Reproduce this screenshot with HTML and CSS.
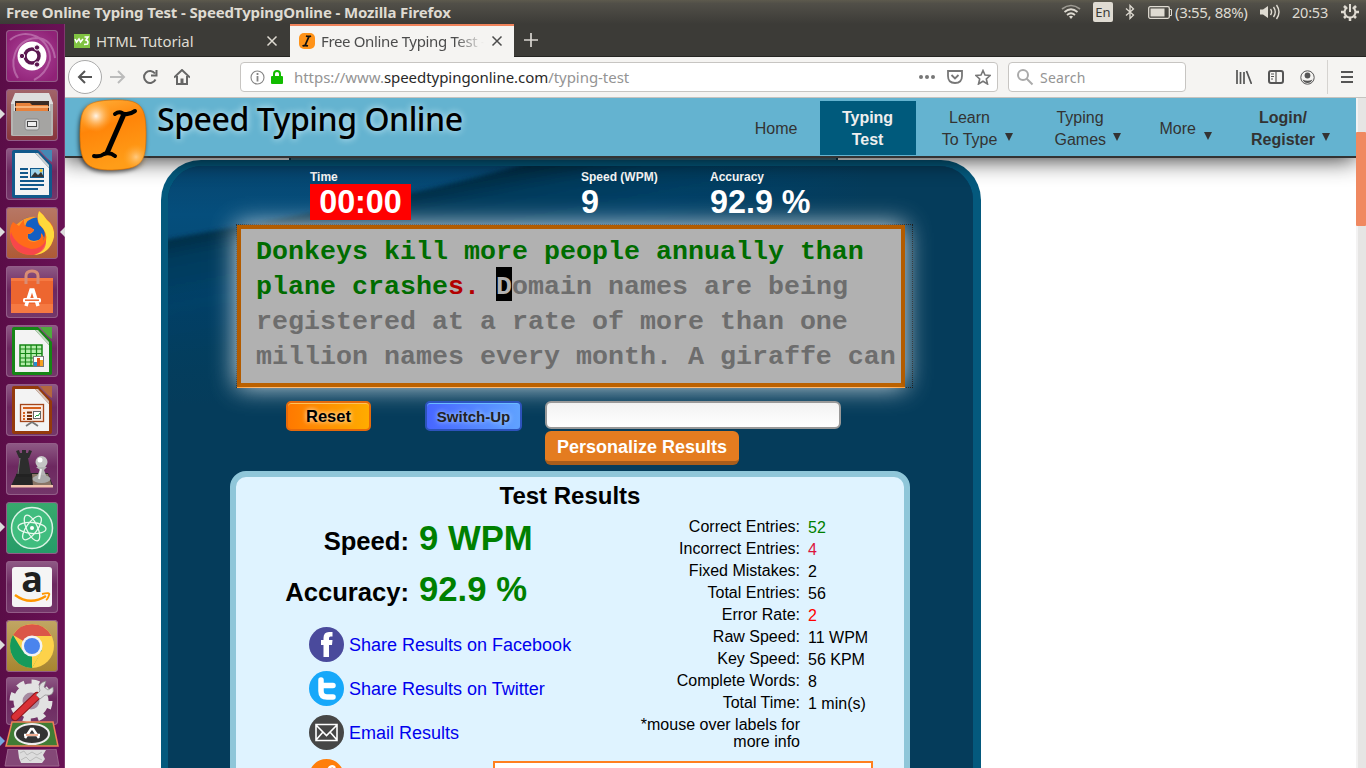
FILE: index.html
```html
<!DOCTYPE html>
<html lang="en">
<head>
<meta charset="utf-8">
<title>Free Online Typing Test - SpeedTypingOnline</title>
<link rel="stylesheet" href="styles.css">
</head>
<body>
<header class="panel">
  <span class="window-title">Free Online Typing Test - SpeedTypingOnline - Mozilla Firefox</span>
  <div class="indicators">
    <svg class="ind-wifi" width="20" height="16" viewBox="0 0 20 16" fill="none" stroke="#dfdbd2" stroke-width="1.7"><path d="M1 5Q10-2 19 5" opacity=".55"/><path d="M3.500 8Q10 2.500 16.500 8M6 11Q10 7.500 14 11"/><path d="M8 12.500L10 15L12 12.500Q10 11 8 12.500Z" fill="#dfdbd2" stroke="none"/></svg>
    <span class="lang">En</span>
    <svg class="ind-bt" width="10" height="16" viewBox="0 0 10 16" fill="none" stroke="#dfdbd2" stroke-width="1.3"><path d="M1 4.500L8.500 11L5 14.500V1.500L8.500 5L1 11.500"/></svg>
    <svg class="ind-bat" width="25" height="13" viewBox="0 0 25 13"><rect x=".7" y=".7" width="20.600" height="11.600" rx="1.500" fill="none" stroke="#dfdbd2" stroke-width="1.300"/><rect x="2.500" y="2.500" width="14" height="8" fill="#dfdbd2"/><path d="M21 3.500h2.500v6H21" fill="none" stroke="#dfdbd2"/></svg>
    <span class="battery">(3:55, 88%)</span>
    <svg class="ind-vol" width="21" height="16" viewBox="0 0 21 16" fill="none" stroke="#dfdbd2" stroke-width="1.400"><path d="M0 5.500h3L8 2v12L3 10.500H0Z" fill="#dfdbd2" stroke="none"/><path d="M10.500 5q2.200 3 0 6M13.500 3q3.500 5 0 10M16.500 1q5 7 0 14"/></svg>
    <span class="clock">20:53</span>
    <svg width="18" height="18" viewBox="0 0 18 18" fill="none" stroke="#dfdbd2"><path d="M6.300 4.400a5.400 5.400 0 1 0 5.400 0" stroke-width="2"/><path d="M9 1v8" stroke-width="2"/><path d="M9 15v3M0 9h3M15 9h3M3 3l2 2M15 3l-2 2M3 15l2-2M15 15l-2-2" stroke-width="2.500"/></svg>
  </div>
</header>
<div class="desktop">
  <nav class="launcher">
    <div class="tile dash"><svg viewBox="0 0 52 52"><path d="M12 48C2 34 8 10 30 8Q46 8 49 28M4 10C20-4 45 8 44 30Q40 44 28 50" fill="none" stroke="#d49bc9" stroke-width="2" opacity=".5"/><circle cx="26" cy="26" r="14.500" fill="#fff"/><circle cx="26" cy="26" r="7" fill="none" stroke="#5b1750" stroke-width="3.500"/><g fill="#5b1750" stroke="#fff" stroke-width="1"><circle cx="16" cy="26" r="2.700"/><circle cx="31" cy="17.500" r="2.700"/><circle cx="31" cy="34.500" r="2.700"/></g></svg></div>
    <div class="tile files run"><svg viewBox="0 0 52 52"><path d="M9 4H43L47 14V22H5V14Z" fill="#ddd"/><path d="M9 12H43V24H9Z" fill="#3b2b25"/><path d="M10 14H24L26 16H42V25H10Z" fill="#e8813a"/><path d="M9 18H43" stroke="#ffc48f" stroke-width="1.500"/><path d="M5 15H8V22H44V15H47V46Q47 47 45 47H7Q5 47 5 46Z" fill="#b6b5b3"/><path d="M7 22H45V46H7Z" fill="#a5a4a2"/><rect x="19" y="30" width="14" height="11" rx="2" fill="#d7d7d7" stroke="#888"/><rect x="21.500" y="32.500" width="9" height="5" fill="#eee" stroke="#444"/></svg></div>
    <div class="tile"><svg viewBox="0 0 52 52"><path d="M8 2H32L46 17V48Q46 50 44 50H8Q6 50 6 48V4Q6 2 8 2Z" fill="#12598b"/><path d="M9 5H29L43 20V47H9Z" fill="#f3f3f3"/><path d="M29 5L43 20V17L32 5Z" fill="#d0d0d0"/><path d="M34 2H46V14Q41 11 34 2Z" fill="#4488b4"/><path d="M14 21h8M14 25h8M14 29h8M14 33h24M14 37h24M14 41h18" stroke="#12598b" stroke-width="1.800"/><rect x="24.500" y="20.500" width="13" height="9" fill="#9cd1e8" stroke="#12598b"/><path d="M25 29l4-5 3 3 3-3 3 5Z" fill="#333"/><circle cx="35" cy="22.500" r="1.500" fill="#f2c32a"/></svg></div>
    <div class="tile fx run active"><svg viewBox="0 0 52 52"><circle cx="26" cy="27" r="17" fill="#145fc2"/><path d="M10 18Q20 8 31 10Q20 12 19 20L22 22H28Q27 27 22 27Q20 33 28 34Q34 33 38 30Q35 38 27 37Q16 34 17 24L12 23Z" fill="#ff9a28"/><path d="M7 15L13 19L18 12Q17 19 22 20Q27 20 28 24Q25 26 22 27Q19 34 28 35Q36 34 35 26Q39 29 37 34Q42 24 33 18Q30 12 33 4Q38 8 40 12Q49 17 48 29Q45 47 26 48Q7 48 4 30Q3 20 7 15Z" fill="#ff6b1a"/><path d="M33 4Q38 8 41 13Q49 19 48 30Q44 47 28 48Q38 44 40 34Q42 26 34 18Q30 12 33 4Z" fill="#ffd83b"/><path d="M5 25Q9 38 25 42Q36 42 40 33Q41 45 27 48Q7 48 4 30Z" fill="#f33760" opacity=".7"/></svg></div>
    <div class="tile"><svg viewBox="0 0 52 52"><path d="M5 12H47V47H5Z" fill="#ed6630"/><path d="M5 12H47V15H5ZM5 38H47V47H5Z" fill="#f57942"/><path d="M20 18V10Q20 5 26 5T32 10V18" fill="none" stroke="#d98d74" stroke-width="3"/><path d="M20 40L25 24H27L32 40" fill="none" stroke="#fff" stroke-width="3.500"/><rect x="17" y="32" width="18" height="4.500" rx="1.500" fill="#fff"/><path d="M19 34.200H33" stroke="#ed6630" stroke-width="1.500"/></svg></div>
    <div class="tile"><svg viewBox="0 0 52 52"><path d="M8 2H32L46 17V48Q46 50 44 50H8Q6 50 6 48V4Q6 2 8 2Z" fill="#168516"/><path d="M9 5H29L43 20V47H9Z" fill="#f3f3f3"/><path d="M29 5L43 20V17L32 5Z" fill="#c6d6c4"/><path d="M34 2H46V14Q41 11 34 2Z" fill="#4eaa3e"/><path d="M14 20h22v21H14Z" fill="#b4edab" stroke="#168516" stroke-width="1.500"/><path d="M19.500 20v21M25 20v21M30.500 20v21M14 24h22M14 28.500h22M14 33h22M14 37h22" stroke="#168516" stroke-width="1.200"/><rect x="27.500" y="31.500" width="10" height="10" fill="#fff" stroke="#777"/><path d="M28 37h3v4h-3Z" fill="#258ed0"/><path d="M31 33h3v8h-3Z" fill="#d9531e"/><path d="M34 35h3v6h-3Z" fill="#f4a020"/></svg></div>
    <div class="tile"><svg viewBox="0 0 52 52"><path d="M8 2H32L46 17V48Q46 50 44 50H8Q6 50 6 48V4Q6 2 8 2Z" fill="#943a0c"/><path d="M9 5H29L43 20V47H9Z" fill="#f3f3f3"/><path d="M29 5L43 20V17L32 5Z" fill="#d5c6be"/><path d="M34 2H46V14Q41 11 34 2Z" fill="#b3673f"/><rect x="14.500" y="20.500" width="23" height="17" fill="#fae8df" stroke="#a44519" stroke-width="1.300"/><path d="M17 24h18" stroke="#d45f1c" stroke-width="2"/><path d="M17 29h2M17 32h2M17 35h2" stroke="#d45f1c" stroke-width="2"/><path d="M21 28.500h5M21 32h5M21 35h5" stroke="#762d07" stroke-width="2"/><rect x="27.500" y="27.500" width="7" height="7" fill="#fff" stroke="#666"/><path d="M29 33l2-2 1 1 2-3" stroke="#1b9c3d" fill="none"/><path d="M26 38L20 42M26 38L32 42" stroke="#777" stroke-width="1.800"/></svg></div>
    <div class="tile"><svg viewBox="0 0 52 52"><path d="M11 30H42L47 43H5Z" fill="#262626"/><path d="M26 31H42L46 43H27Z" fill="#897567"/><path d="M5 42H47V44.500H5Z" fill="#f2c3ad"/><path d="M10 8L13 7 14 10H16V7H20V10H22L23 7 26 8 23 15H13ZM14 15H22L25 32H11Z" fill="#2d2d2d"/><path d="M14 15L12 31" stroke="#777"/><path d="M10 31H26V34H10Z" fill="#222"/><circle cx="35.500" cy="19" r="6" fill="#c4c4c4"/><circle cx="34" cy="17" r="2.500" fill="#fff"/><path d="M30 24H41L38 27L41 35H30L34 27Z" fill="#b5b5b5"/><ellipse cx="35.500" cy="36" rx="9" ry="4" fill="#aaa"/><path d="M35 26L33 36" stroke="#eee" stroke-width="2"/></svg></div>
    <div class="tile atom run"><svg viewBox="0 0 52 52"><circle cx="26" cy="26" r="20.500" fill="#40bd7f" stroke="#d9f3e4" stroke-width="1.500"/><g fill="none" stroke="#e8f9ed" stroke-width="1.300"><ellipse cx="26" cy="26" rx="5.500" ry="14" transform="rotate(-25 26 26)"/><ellipse cx="26" cy="26" rx="5.500" ry="14" transform="rotate(36 26 26)"/><ellipse cx="26" cy="26" rx="5.500" ry="14" transform="rotate(94 26 26)"/></g><circle cx="26" cy="26" r="2" fill="#fff"/></svg></div>
    <div class="tile amazon"><span class="amazon-a">a</span><svg viewBox="0 0 52 52"><path d="M9 34Q24 45 40 35" fill="none" stroke="#ff9700" stroke-width="2.500"/><path d="M36 33Q45 31 43 34Q42 38 40 39" fill="none" stroke="#ff9700" stroke-width="1.800"/></svg></div>
    <div class="tile chrome run"><svg viewBox="0 0 52 52"><circle cx="26" cy="26" r="22" fill="#fdd24a"/><path d="M26 26L7 15A22 22 0 0 1 45.500 16Z" fill="#db5648"/><path d="M7 15A22 22 0 0 0 26 48L36 30L26 26L16 30Z" fill="#159a5b"/><path d="M26 16H46L36 26ZM26 36L26 48L36 31Z" fill="#fdd24a"/><circle cx="26" cy="26" r="10.500" fill="#f2f3f4"/><circle cx="26" cy="26" r="8" fill="#4a84ed"/></svg></div>
    <div class="tile settings"><svg viewBox="0 0 52 48"><circle cx="25" cy="24" r="13" fill="#a58aa0" stroke="#e2e2e2" stroke-width="9"/><circle cx="25" cy="24" r="18.500" fill="none" stroke="#e2e2e2" stroke-width="6" stroke-dasharray="7.500 7.030"/><path d="M9 40L31 19" stroke="#8f161b" stroke-width="8" stroke-linecap="round"/><path d="M9 40L31 19" stroke="#d93036" stroke-width="6" stroke-linecap="round"/><path d="M30 18L34 14Q31 6 40 4L38 10L42 13L47 10Q49 20 39 18L34 22Z" fill="#ddd" stroke="#888" stroke-width=".7"/></svg></div>
    <div class="folded run"><svg class="updater" width="58" height="28" viewBox="0 0 58 28"><path d="M9 1H50L55 25H3Z" fill="#407c35" stroke="#f08058" stroke-width="1.500"/><ellipse cx="29" cy="13" rx="17" ry="10" fill="#333" stroke="#eee" stroke-width="2"/><path d="M22 17L28 8H30L36 17M21 14H37" fill="none" stroke="#fff" stroke-width="2.500"/><path d="M23 14H35" stroke="#e26128"/></svg><svg class="trash" width="58" height="19" viewBox="0 0 58 19"><path d="M5 0H53L56 17H2Z" fill="#844877" stroke="#9c668e"/><path d="M15 1H43L40 6L42 10L39 14H18L16 9Z" fill="#ddd"/><path d="M17 4L21 2L24 6L29 3L34 6L39 3M18 11L23 8L27 12L33 8L39 11" stroke="#bbb" stroke-width="1" fill="none"/></svg></div>
  </nav>
  <main class="browser">
    <div class="tabs">
      <div class="tab"><span class="w3"><svg width="16" height="14" viewBox="0 0 16 14" fill="none" stroke="#fff" stroke-width="1.600"><path d="M1 5l1.500 3L5 5l1.500 3L9 5M10.500 3H14L12 6Q15 7 13.500 10L10 10.500"/></svg></span><span class="tab-label">HTML Tutorial</span><svg class="close" width="12" height="12" viewBox="0 0 12 12"><path d="M1.500 1.500l9 9M10.500 1.500l-9 9" fill="none" stroke="currentColor" stroke-width="1.500"/></svg></div>
      <div class="tab selected"><svg class="favicon" width="16" height="16" viewBox="0 0 16 16"><rect width="16" height="16" rx="5" fill="#ff9319"/><path d="M7 3Q10 4 12 3M10 3.500L6 12.500M3.500 13Q6 12 9 13" fill="none" stroke="#111" stroke-width="1.800"/></svg><span class="tab-label fade">Free Online Typing Test -</span><svg class="close" width="12" height="12" viewBox="0 0 12 12"><path d="M1.500 1.500l9 9M10.500 1.500l-9 9" fill="none" stroke="currentColor" stroke-width="1.500"/></svg></div>
      <svg class="newtab" width="14" height="14" viewBox="0 0 14 14"><path d="M7 0v14M0 7h14" stroke="#d9d6d1" stroke-width="1.700"/></svg>
    </div>
    <div class="toolbar">
      <span class="back"><svg width="16" height="14" viewBox="0 0 16 14" fill="none" stroke="#555" stroke-width="2"><path d="M15 7H1.500M8 1L2 7l6 6"/></svg></span>
      <svg class="forward" width="16" height="14" viewBox="0 0 16 14" fill="none" stroke="#bbb" stroke-width="2"><path d="M0 7h14.500M8 1l6 6-6 6"/></svg>
      <svg class="reload" width="16" height="16" viewBox="0 0 16 16" fill="none" stroke="#666" stroke-width="2"><path d="M13 4.500A6 6 0 1 0 13.500 10.500M14.500 1V6.500H9"/></svg>
      <svg class="home" width="16" height="16" viewBox="0 0 16 16" fill="none" stroke="#666" stroke-width="2"><path d="M0 8.500L8 1l8 7.500M3 7v8h10V7"/><path d="M8 15V9.500" stroke-width="3"/></svg>
      <div class="urlbar"><svg width="15" height="15" viewBox="0 0 15 15" fill="none" stroke="#858585"><circle cx="7.500" cy="7.500" r="6.500" stroke-width="1.100"/><path d="M7.500 3v2M7.500 6v5.500" stroke-width="1.800"/></svg><svg class="lock" width="12" height="14" viewBox="0 0 12 14"><rect y="6" width="12" height="8" rx="1" fill="#12bc00"/><path d="M3 7V4Q3 1 6 1T9 4V7" fill="none" stroke="#12bc00" stroke-width="2"/></svg><span class="url">https://www.<b>speedtypingonline.com</b>/typing-test</span><span class="dots"><i></i><i></i><i></i></span><svg class="pocket" width="16" height="14" viewBox="0 0 16 14" fill="none" stroke="#777" stroke-width="1.800"><path d="M1 1H15V6Q15 13 8 13T1 6ZM4.500 5L8 8.500L11.500 5"/></svg><svg width="16" height="16" viewBox="0 0 16 16" fill="none" stroke="#777" stroke-width="1.600"><path d="M8 1.500L10 6L15 6.500L11.300 10L12.500 15L8 12.300L3.500 15L4.700 10L1 6.500L6 6Z"/></svg></div>
      <div class="search"><svg width="17" height="17" viewBox="0 0 17 17" fill="none" stroke="#aaa" stroke-width="2"><circle cx="6" cy="6" r="5"/><path d="M9.500 9.500l6 6"/></svg><span>Search</span></div>
      <div class="tools"><svg width="16" height="14" viewBox="0 0 16 14" fill="none" stroke="#555" stroke-width="1.700"><path d="M1 0v14M4.500 2v12M8 2v12M10.500 1l5 13"/></svg><svg width="16" height="14" viewBox="0 0 16 14" fill="none" stroke="#555" stroke-width="2"><rect x="1" y="1" width="14" height="12" rx="2"/><path d="M8 1v12" stroke-width="1.200"/><path d="M3 4h3M3 6.500h3M3 9h2" stroke-width="1"/></svg><svg width="15" height="15" viewBox="0 0 15 15"><circle cx="7.500" cy="7.500" r="6.700" fill="none" stroke="#555"/><circle cx="7.500" cy="5.500" r="2.900" fill="#555"/><path d="M2.500 9.500Q7.500 12 12.500 9.500Q11 13 7.500 13T2.500 9.500Z" fill="#555"/></svg></div>
      <span class="separator"></span>
      <svg class="burger" width="12" height="12" viewBox="0 0 12 12"><path d="M0 1h12M0 6h12M0 11h12" stroke="#555" stroke-width="1.800"/></svg>
    </div>
    <div class="viewport">
      <div class="page">
        <header class="site-head">
          <div class="brand">
            <svg class="logo" width="76" height="78" viewBox="0 0 76 78"><defs><linearGradient id="orange" x2=".3" y2="1"><stop stop-color="#ffb23c"/><stop offset=".45" stop-color="#ff8509"/><stop offset="1" stop-color="#ff9d18"/></linearGradient><radialGradient id="shine"><stop stop-color="#fff" stop-opacity=".9"/><stop offset="1" stop-color="#ffb64e" stop-opacity="0"/></radialGradient></defs><path d="M37 2C65 1 70 8 70 36C70 65 66 71 36 72C10 72 4 65 4 37C4 9 9 3 37 2Z" fill="url(#orange)" stroke="#df7200" stroke-width=".7"/><circle cx="20" cy="18" r="16" fill="url(#shine)"/><circle cx="60" cy="59" r="13" fill="url(#shine)" opacity=".5"/><path d="M39 16Q43 13 46 15Q52 18 59 13" fill="none" stroke="#000" stroke-width="4" stroke-linecap="round"/><path d="M48 16L31 55" fill="none" stroke="#000" stroke-width="5"/><path d="M18 58Q24 59 28 56Q34 54 39 58" fill="none" stroke="#000" stroke-width="4" stroke-linecap="round"/></svg>
            <span class="brand-name">Speed Typing Online</span>
          </div>
          <nav class="menu">
            <a class="m-home">Home</a>
            <a class="m-current">Typing<br>Test</a>
            <a class="m-learn"><span>Learn<br>To Type</span><i></i></a>
            <a class="m-games"><span>Typing<br>Games</span><i></i></a>
            <a class="m-more"><span>More</span><i></i></a>
            <a class="m-login"><span>Login/<br>Register</span><i></i></a>
          </nav>
        </header>
        <div class="tab-strip"></div>
        <section class="test">
          <div class="test-inner">
            <svg class="swoosh" width="805" height="320" viewBox="0 0 805 320"><defs><linearGradient id="fadeA" gradientUnits="userSpaceOnUse" x1="180" y1="36" x2="206" y2="170"><stop stop-color="#042c44"/><stop offset=".16" stop-color="#053a5b"/><stop offset=".5" stop-color="#05426a"/><stop offset="1" stop-color="#053f62"/></linearGradient><linearGradient id="fadeB" x2="0" y2="1"><stop stop-color="#064670"/><stop offset=".15" stop-color="#054e7c"/><stop offset="1" stop-color="#053c5b"/></linearGradient><linearGradient id="fadeC" x1="0" x2="1"><stop offset=".6" stop-color="#053c5b" stop-opacity="0"/><stop offset=".87" stop-color="#053c5b"/></linearGradient><linearGradient id="fadeD" x2="0" y2="1"><stop offset=".35" stop-color="#053c5b" stop-opacity="0"/><stop offset=".75" stop-color="#053c5b"/></linearGradient><filter id="soft"><feGaussianBlur stdDeviation="2"/></filter></defs><rect width="805" height="320" fill="url(#fadeB)"/><path d="M-20 77Q90 57 180 40T360-3L820-20V340H-20Z" fill="url(#fadeA)" filter="url(#soft)"/><rect width="805" height="320" fill="url(#fadeC)"/><rect width="805" height="320" fill="url(#fadeD)"/></svg>
            <div class="stats">
              <div class="stat time"><small>Time</small><strong>00:00</strong></div>
              <div class="stat speed"><small>Speed (WPM)</small><strong>9</strong></div>
              <div class="stat"><small>Accuracy</small><strong>92.9 %</strong></div>
            </div>
            <div class="focus"><div class="copy"><span class="ok">Donkeys kill more people annually than<br>plane crashe</span><span class="bad">s.</span> <span class="cursor">D</span>omain names are being<br>registered at a rate of more than one<br>million names every month. A giraffe can</div></div>
            <div class="controls">
              <button class="reset">Reset</button>
              <button class="switch">Switch-Up</button>
              <div class="personal"><input type="text" aria-label="Name"><button class="personalize">Personalize Results</button></div>
            </div>
            <section class="results">
              <h2>Test Results</h2>
              <div class="columns">
                <div class="summary">
                  <div class="score"><b>Speed:</b><strong>9 WPM</strong></div>
                  <div class="score"><b>Accuracy:</b><strong>92.9 %</strong></div>
                  <div class="share">
                    <a><svg viewBox="0 0 35 35"><circle cx="17.500" cy="17.500" r="17.500" fill="#4a4a9c"/><path d="M14.500 30V18H12V13H14.500V11Q14.500 5 20 5H23.500V9.500H21.500Q20 9.500 20 11V13H23.500L23 18H20V30Z" fill="#fff"/></svg><span>Share Results on Facebook</span></a>
                    <a><svg viewBox="0 0 35 35"><circle cx="17.500" cy="17.500" r="17.500" fill="#17a8fa"/><path d="M12 9V20Q12 26 18 26H24M12 14.500H24" fill="none" stroke="#fff" stroke-width="5.500" stroke-linecap="round"/></svg><span>Share Results on Twitter</span></a>
                    <a><svg viewBox="0 0 35 35"><circle cx="17.500" cy="17.500" r="17.500" fill="#464646"/><path d="M7 9.500H28V25.500H7ZM7 10L17.500 20.500L28 10M7 25L14 17M28 25L21 17" fill="none" stroke="#fff" stroke-width="1.600"/></svg><span>Email Results</span></a>
                    <a><svg viewBox="0 0 35 35"><circle cx="17.500" cy="17.500" r="17.500" fill="#ff7e0a"/><path d="M18 12L21 8Q24 6 26 9" fill="none" stroke="#fff" stroke-width="2.500"/></svg></a>
                  </div>
                </div>
                <table class="details">
                  <tr><th>Correct Entries:</th><td class="green">52</td></tr>
                  <tr><th>Incorrect Entries:</th><td class="crimson">4</td></tr>
                  <tr><th>Fixed Mistakes:</th><td>2</td></tr>
                  <tr><th>Total Entries:</th><td>56</td></tr>
                  <tr><th>Error Rate:</th><td class="red">2</td></tr>
                  <tr><th>Raw Speed:</th><td>11 WPM</td></tr>
                  <tr><th>Key Speed:</th><td>56 KPM</td></tr>
                  <tr><th>Complete Words:</th><td>8</td></tr>
                  <tr><th>Total Time:</th><td>1 min(s)</td></tr>
                  <tr class="note"><th>*mouse over labels for more info</th><td></td></tr>
                </table>
                <div class="link-box"></div>
              </div>
            </section>
          </div>
        </section>
      </div>
      <div class="scrollbar"><div class="thumb"></div></div>
    </div>
  </main>
</div>
</body>
</html>
```
FILE: styles.css
```css
* { box-sizing: border-box; }
body { margin: 0; width: 1366px; height: 768px; overflow: hidden; display: flex; flex-direction: column; font-family: "Liberation Sans", Arial, sans-serif; }
svg { display: block; flex: none; }

.panel { height: 24px; flex: none; display: flex; align-items: center; justify-content: space-between; padding: 0 7px 0 6px; background: linear-gradient(#5d5a4d, #514f48 15%, #3c3b37); color: #dfdbd2; font: 14px/24px "Noto Sans", sans-serif; }
.window-title { font-weight: 700; font-size: 15px; letter-spacing: -.13px; }
.indicators { display: flex; align-items: center; white-space: nowrap; }
.lang { width: 20px; height: 20px; margin: 0 12px; border-radius: 2px; background: #dfdbd2; color: #3c3b37; text-align: center; font-size: 13px; line-height: 20px; }
.ind-bat { margin-left: 13px; }
.battery { margin: 0 11px 0 2px; width: 74px; font-size: 15px; letter-spacing: -.35px; }
.ind-vol { margin-right: 11px; }
.clock { width: 37px; margin-right: 12px; font-size: 14.5px; letter-spacing: -.2px; }

.desktop { flex: 1; display: flex; min-height: 0; }
.launcher { width: 65px; flex: none; padding: 6px 0 0 6px; display: flex; flex-direction: column; gap: 7px; background: linear-gradient(90deg, #5a0d47, #681154 90%); border-right: 1px solid #80386f; }
.tile { width: 52px; height: 52px; flex: none; position: relative; border-radius: 4px; background: linear-gradient(#8f5b86, #6d2860 45%, #74376a); box-shadow: inset 0 0 0 1px #935d88; }
.tile svg { width: 52px; height: 52px; }
.dash { background: radial-gradient(#b04a9e, #902277 80%); }
.files { background: linear-gradient(#a2656a, #86343b); }
.fx { background: linear-gradient(#b77866, #ae5a35); }
.atom { background: linear-gradient(#38a96d, #259b68); }
.chrome { background: linear-gradient(#c1a664, #a7852f); }
.amazon { padding: 6px; }
.amazon svg { position: absolute; inset: 0; }
.amazon-a { display: block; width: 40px; height: 40px; border-radius: 3px; background: #f5f5f5; font: 700 36px/24px "Open Sans", sans-serif; text-align: center; color: #202020; }
.run::before, .active::after { content: ""; position: absolute; top: 20px; left: -6px; border: 5px solid transparent; border-left-color: #ddd; border-right: 0; }
.active::after { left: auto; right: -7px; border-left: 0; border-right: 5px solid #ddd; }
.settings { height: 48px; margin-top: -2px; }
.settings svg { width: 52px; height: 48px; }
.folded { position: relative; margin: -11px 0 0 -3px; }
.folded::before { left: -3px; top: 15px; border-left-color: #77a8df; }

.browser { flex: 1; display: flex; flex-direction: column; min-width: 0; }
.tabs { height: 33px; flex: none; display: flex; background: #3c3b37; border-bottom: 1px solid #252522; }
.tab { height: 33px; display: flex; align-items: center; color: #dfdbd2; width: 225px; padding: 0 12px 0 9px; font: 15px "Noto Sans", sans-serif; letter-spacing: -.08px; position: relative; }
.w3 { width: 16px; height: 14px; background: #80c342; margin-right: 6px; }
.selected { background: #f5f4f2; color: #4c4c4c; width: 224px; border-top: 2px solid #f0835b; padding-left: 9px; padding-right: 11px; }
.selected .tab-label, .selected .close { position: relative; top: -1px; }
.favicon { margin-right: 6px; position: relative; top: -1px; }
.tab-label { flex: 1; white-space: nowrap; overflow: hidden; }
.fade { letter-spacing: -.35px; margin-right: 7px; mask-image: linear-gradient(90deg, #000 82%, transparent); }
.newtab { margin: 9px 0 0 10px; }
.toolbar { height: 41px; flex: none; display: flex; align-items: center; background: #f5f4f2; border-bottom: 1px solid #c5c3bf; padding-left: 3px; font: 14px "Noto Sans", sans-serif; }
.back { width: 34px; height: 34px; border: 1px solid #aaa; border-radius: 50%; background: #fff; display: grid; place-items: center; }
.forward { margin-left: 8px; }
.reload { margin-left: 16px; }
.home { margin-left: 16px; }
.urlbar { margin-left: 50px; width: 758px; height: 30px; border: 1px solid #c7c5c2; border-radius: 4px; background: #fff; display: flex; align-items: center; padding: 0 6px 0 9px; color: #949494; }
.lock { margin: 0 11px 0 6px; }
.url { flex: 1; font-size: 15px; letter-spacing: -.05px; }
.url b { font-weight: 400; color: #292929; }
.dots { display: flex; gap: 2px; }
.dots i { width: 4px; height: 4px; border-radius: 50%; background: #777; }
.pocket { margin: 0 12px; }
.search { width: 178px; height: 30px; margin-left: 10px; border: 1px solid #c7c5c2; border-radius: 4px; background: #fff; display: flex; align-items: center; gap: 6px; padding-left: 8px; color: #949494; letter-spacing: .2px; }
.tools { display: flex; align-items: center; gap: 16px; margin-left: 50px; }
.separator { width: 1px; height: 34px; background: #d5d3d0; margin: 0 13px 0 12px; }

.viewport { flex: 1; display: flex; min-height: 0; }
.page { flex: 1; overflow: hidden; background: #fff; }
.site-head { height: 60px; display: flex; justify-content: space-between; background: #64b3d0; border-bottom: 2px solid #333; box-shadow: 0 1px 23px rgba(0,0,0,.85); position: relative; z-index: 2; padding-right: 26px; }
.brand { display: flex; padding-left: 11px; }
.logo { filter: drop-shadow(-1px 2px 2px rgba(0,0,0,.65)); }
.brand-name { font: 500 32px/42px "Noto Sans", sans-serif; letter-spacing: -.45px; margin-left: 5px; color: #000; white-space: nowrap; text-shadow: 0 0 7px #e2f6ff; }
.menu { display: flex; align-items: center; height: 58px; font-size: 16px; line-height: 22px; color: #333; text-align: center; white-space: nowrap; padding-top: 2px; }
.menu a { display: flex; align-items: center; justify-content: center; }
.menu a:not(.m-current) { padding-top: 1px; }
.menu i { border: 4px solid transparent; border-top: 8px solid #333; border-bottom: 0; margin: 16px 0 0 7px; }
.m-home { width: 43px; margin-right: 22px; }
.menu .m-current { display: block; width: 96px; height: 54px; padding-top: 6px; background: #005a7c; color: #eee; font-weight: 700; }
.m-learn { margin-left: 26px; }
.m-learn span { width: 56px; }
.m-games { margin-left: 42px; }
.m-games span { width: 51px; }
.m-games i { margin-left: 7px; }
.m-more { margin-left: 39px; }
.m-more i { margin-top: 14px !important; margin-left: 8px; }
.m-login { margin-left: 39px; font-weight: 700; }
.tab-strip { width: 549px; height: 2px; margin-left: 224px; background: #437588; border: solid #073b51; border-width: 0 2px; }
.test { width: 820px; height: 630px; margin-left: 96px; padding: 6px 8px 0 7px; border-radius: 40px 40px 0 0; background: #04597d; }
.test-inner { height: 624px; position: relative; border-radius: 34px 34px 0 0; overflow: hidden; background: #053c5b; padding: 4px 63px 0 62px; }
.swoosh { position: absolute; inset: 0; }
.test-inner > :not(.swoosh) { position: relative; }
.stats { height: 54px; display: flex; padding-left: 80px; color: #fff; z-index: 1; }
.stat { display: flex; flex-direction: column; align-items: flex-start; }
.stat small { font: 700 12px/14px "Liberation Sans", sans-serif; }
.stat strong { font-size: 32.3px; line-height: 36px; }
.time { width: 271px; }
.time strong { width: 101px; text-align: center; background: #f00; }
.speed { width: 129px; }
.focus { width: 677px; height: 164px; margin-left: 6px; border: 1px dotted #000; }
.copy { width: 668px; height: 162px; padding: 3px 0 0 15px; border: 4px solid #b35c00; border-bottom-color: #bb6100; background: #b1b1b1; box-shadow: 0 0 24px rgba(255,255,255,.85), inset 0 -1px 0 #b1b1b1, 0 1px 0 #ff8b12; color: #6d6d6d; font: 700 26.67px/35px "Liberation Mono", monospace; white-space: pre; overflow: hidden; padding-top: 6px; }
.ok { color: #006c00; }
.bad { color: #b20000; }
.cursor { display: inline-block; background: #000; color: #b1b1b1; height: 34px; margin-top: -3px; padding-top: 3px; vertical-align: top; }
.controls { display: flex; align-items: flex-start; height: 83px; padding: 13px 0 0 56px; }
button, input { display: block; border: 0; margin: 0; font-family: "Liberation Sans", sans-serif; }
.reset { width: 85px; height: 30px; padding: 1px 0 0; background: linear-gradient(90deg, #ff7900, #ffac00); border: 2px solid #e66a0b; border-radius: 5px; box-shadow: inset 0 1px #ffc35c; font-weight: 700; font-size: 16.5px; text-shadow: 0 0 5px #fff; }
.switch { width: 97px; height: 30px; margin-left: 54px; padding: 1px 0 0; background: linear-gradient(90deg, #4766ff, #60a2ff); border: 2px solid #2d53bd; border-radius: 5px; box-shadow: inset 0 1px #69bcff; font-weight: 700; font-size: 15px; color: #222; text-shadow: 0 0 5px #b9dcff; }
.personal { margin-left: 23px; }
.personal input { width: 296px; height: 28px; border: 2px solid #999; border-radius: 6px; background: linear-gradient(#f2f2f2, #fff); }
.personalize { width: 194px; height: 34px; margin-top: 2px; padding: 2px 0 0; border-radius: 6px; background: #e47c20; border-bottom: 4px solid #a95d1b; color: #fff; font-size: 18px; font-weight: 700; }
.results { width: 680px; height: 350px; border: 6px solid #8fc6d9; border-radius: 16px; background: #dff3ff; }
.results h2 { margin: 0; font-size: 24px; line-height: 37px; text-align: center; }
.columns { display: grid; grid-template-columns: 385px 283px; }
.summary { grid-row: 1 / 3; }
.score { height: 51px; display: flex; align-items: center; }
.score b { width: 173px; text-align: right; font-size: 25.6px; padding-top: 3px; }
.score strong { margin: -2px 0 0 10px; color: #008000; font-size: 34.7px; }
.share { padding: 11px 0 0 73px; }
.share a { display: flex; align-items: center; height: 35px; gap: 5px; margin-bottom: 9px; color: #00e; font-size: 18px; white-space: nowrap; }
.share a span { padding-top: 2px; }
.share svg { width: 35px; height: 35px; }
.details { border-collapse: collapse; font-size: 16px; margin-top: 1px; height: 238px; align-self: start; }
.details tr { height: 22px; }
.details th { width: 179px; padding: 3px 0 0; text-align: right; font-weight: 400; height: 22px; line-height: 18px; vertical-align: top; }
.details td { padding: 4px 0 0 8px; line-height: 18px; vertical-align: top; white-space: nowrap; }
.details .note { height: 40px; }
.note th { line-height: 17px; padding-left: 15px; }
.green { color: #008000; }
.crimson { color: #dc143c; }
.red { color: #f00; }
.link-box { width: 380px; height: 60px; margin: 8px 0 0 -128px; border: 2px solid #ff801f; background: #fff; z-index: 1; }
.scrollbar { width: 10px; background: linear-gradient(90deg, #f3f2f2 2px, #e6e5e4 2px); padding-top: 34px; }
.thumb { height: 94px; background: #f08961; border-radius: 1px; }
```
